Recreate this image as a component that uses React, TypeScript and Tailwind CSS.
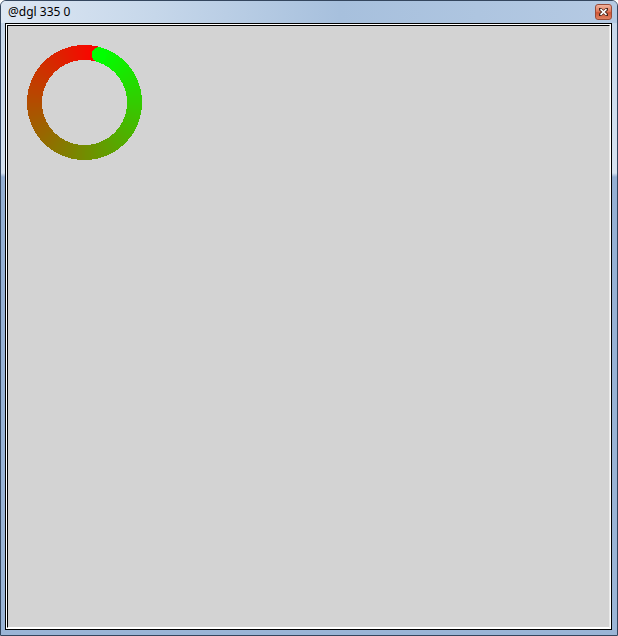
import React from "react";

const CX = 57.5;
const CY = 57.5;
const R = 50;
const START = 17;
const STEPS = 180;

function pt(deg: number) {
  const a = (deg * Math.PI) / 180;
  return [CX + R * Math.sin(a), CY - R * Math.cos(a)];
}

function GradientRing() {
  const segs = [];
  for (let i = 0; i < STEPS; i++) {
    const t = i / STEPS;
    const a1 = START + (360 * i) / STEPS;
    const a2 = START + (360 * (i + 1)) / STEPS + (i < STEPS - 1 ? 0.6 : 0);
    const [x1, y1] = pt(a1);
    const [x2, y2] = pt(a2);
    const r = Math.round(255 * t);
    const g = 255 - r;
    segs.push(
      <path
        key={i}
        d={`M ${x1} ${y1} A ${R} ${R} 0 0 1 ${x2} ${y2}`}
        stroke={`rgb(${r},${g},0)`}
        strokeWidth={15}
        fill="none"
      />
    );
  }
  const [sx, sy] = pt(START);
  return (
    <svg width={116} height={116} viewBox="0 0 116 116" shapeRendering="crispEdges">
      {segs}
      <circle cx={sx} cy={sy} r={7.5} fill="rgb(0,255,0)" />
    </svg>
  );
}

function CloseButton() {
  return (
    <div className="w-[17px] h-[16px] rounded-[3px] border border-[#9a4a36] bg-[linear-gradient(to_bottom,#f0b4a0,#e07a5c_45%,#cf5535_55%,#e08262)] flex items-center justify-center">
      <svg width="9" height="8" viewBox="0 0 9 8">
        <path d="M1 1 L8 7 M8 1 L1 7" stroke="#4a2418" strokeWidth="3.2" strokeLinecap="square" />
        <path d="M1.5 1.2 L7.5 6.8 M7.5 1.2 L1.5 6.8" stroke="#ffffff" strokeWidth="1.6" />
      </svg>
    </div>
  );
}

export default function App() {
  return (
    <div className="w-[618px] h-[636px] flex flex-col border border-[#34465e] rounded-t-[6px] bg-[linear-gradient(to_bottom,#c5d6ea_0px,#d6e2f0_172px,#94afd3_176px,#9bb5d6_100%)] overflow-hidden">
      {/* title bar */}
      <div className="h-[22px] flex items-center justify-between pl-[7px] pr-[5px] bg-[linear-gradient(to_right,#dde7f3,#c6d7ea_25%,#a7c0dd_55%,#b5cae3)]">
        <span className="text-[12px] leading-none text-black font-['Noto_Sans','Liberation_Sans',sans-serif]">
          @dgl 335 0
        </span>
        <CloseButton />
      </div>

      {/* client area */}
      <div className="flex-1 flex pl-[4px] pr-[5px] pb-[5px]">
        <div className="flex-1 flex border border-black">
          <div className="flex-1 flex border border-white">
            <div className="flex-1 border border-black border-r-[#e8e8e8] border-b-white bg-[#d3d3d3] pl-[19px] pt-[19px]">
              <GradientRing />
            </div>
          </div>
        </div>
      </div>
    </div>
  );
}
